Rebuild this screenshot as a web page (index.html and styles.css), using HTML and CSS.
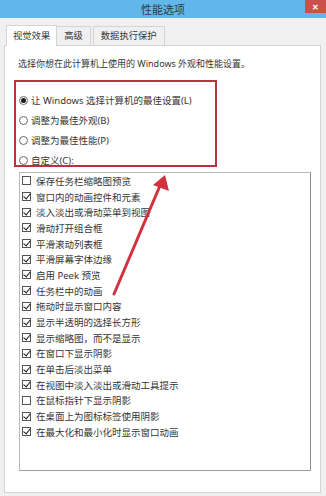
FILE: index.html
```html
<!DOCTYPE html>
<html lang="zh-CN">

<head>
    <meta charset="UTF-8">
    <meta name="viewport" content="width=device-width, initial-scale=1.0">
    <title>性能选项</title>
    <link rel="stylesheet" href="styles.css">
</head>

<body>

    <div class="titlebar">
        <div></div>
        <div class="title">性能选项</div>
        <div class="close-btn">✕</div>
    </div>

    <div class="tabs">
        <div class="tab active">视觉效果</div>
        <div class="tab">高级</div>
        <div class="tab">数据执行保护</div>
    </div>

    <div class="panel">
        <p class="desc">选择你想在此计算机上使用的 Windows 外观和性能设置。</p>

        <div class="choices">
            <div class="row"><span class="radio on"></span>让 Windows 选择计算机的最佳设置(L)</div>
            <div class="row"><span class="radio"></span>调整为最佳外观(B)</div>
            <div class="row"><span class="radio"></span>调整为最佳性能(P)</div>
            <div class="row"><span class="radio"></span>自定义(C):</div>
        </div>

        <div class="list">
            <div class="item"><span class="cb"></span>保存任务栏缩略图预览</div>
            <div class="item"><span class="cb on"></span>窗口内的动画控件和元素</div>
            <div class="item"><span class="cb on"></span>淡入淡出或滑动菜单到视图</div>
            <div class="item"><span class="cb on"></span>滑动打开组合框</div>
            <div class="item"><span class="cb on"></span>平滑滚动列表框</div>
            <div class="item"><span class="cb on"></span>平滑屏幕字体边缘</div>
            <div class="item"><span class="cb on"></span>启用 Peek 预览</div>
            <div class="item"><span class="cb on"></span>任务栏中的动画</div>
            <div class="item"><span class="cb on"></span>拖动时显示窗口内容</div>
            <div class="item"><span class="cb on"></span>显示半透明的选择长方形</div>
            <div class="item"><span class="cb on"></span>显示缩略图，而不是显示</div>
            <div class="item"><span class="cb on"></span>在窗口下显示阴影</div>
            <div class="item"><span class="cb on"></span>在单击后淡出菜单</div>
            <div class="item"><span class="cb on"></span>在视图中淡入淡出或滑动工具提示</div>
            <div class="item"><span class="cb"></span>在鼠标指针下显示阴影</div>
            <div class="item"><span class="cb on"></span>在桌面上为图标标签使用阴影</div>
            <div class="item"><span class="cb on"></span>在最大化和最小化时显示窗口动画</div>
        </div>
    </div>

    <!-- 红色箭头, 压在列表上面 -->
    <svg class="arrow" width="326" height="496" viewBox="0 0 326 496">
        <line x1="114" y1="294" x2="159" y2="188" stroke="#d2323f" stroke-width="3" stroke-linecap="round" />
        <polygon points="165,175 169,191 153,185" fill="#d2323f" />
    </svg>

</body>

</html>
```

FILE: styles.css
```css
* {
    margin: 0px;
    box-sizing: border-box;
}

body {
    width: 326px;
    height: 496px;
    overflow: hidden;
    position: relative;
    background-color: #f0f0f0;
    font-family: "Noto Sans", "Noto Sans CJK SC", sans-serif;
    color: #353535;
}

.titlebar {
    height: 18px;
    background-color: #62b7ea;
    display: grid;
    grid-template-columns: 1fr auto 1fr;
}

.title {
    font-size: 11px;
    line-height: 19px;
    color: #2b3a48;
}

.close-btn {
    justify-self: end;
    width: 21px;
    height: 13px;
    background-color: #c9504b;
    color: #fff;
    font-size: 8px;
    line-height: 13px;
    text-align: center;
    font-weight: bold;
}

.tabs {
    display: flex;
    align-items: flex-end;
    margin-top: 6px;
    padding-left: 6px;
    height: 21px;
}

.tab {
    height: 19px;
    padding: 0 7px;
    font-size: 9.3px;
    line-height: 18px;
    border: 1px solid #d4d4d4;
    border-bottom: none;
    background-color: #f0f0f0;
    margin-left: -1px;
}

.tab.active {
    height: 21px;
    padding: 0 6px;
    background-color: #fff;
    line-height: 20px;
    margin-left: 0;
    position: relative;
    z-index: 1;
    margin-bottom: -1px;
}

.tab:nth-child(3) {
    margin-left: 2px;
}

.panel {
    margin: 0 5px 0 4px;
    height: 448px;
    background-color: #fff;
    border: 1px solid #d4d4d4;
}

.desc {
    font-size: 9px;
    line-height: 14px;
    padding: 11px 0 0 13px;
}

.choices {
    margin: 9px 0 0 9px;
    width: 203px;
    height: 87px;
    border: 2px solid #b7343f;
    padding: 8px 0 0 3px;
}

.row {
    height: 20px;
    display: flex;
    align-items: center;
    font-size: 9.5px;
}

.radio {
    width: 9px;
    height: 9px;
    border: 1px solid #6a6a6a;
    border-radius: 50%;
    margin-right: 3px;
    display: flex;
    align-items: center;
    justify-content: center;
}

.radio.on::after {
    content: "";
    width: 5px;
    height: 5px;
    border-radius: 50%;
    background-color: #1a1a1a;
}

.list {
    margin: 5px 0 0 14px;
    width: 292px;
    height: 299px;
    border: 1px solid #b9b9b9;
    border-right-color: #8d8d8d;
    border-bottom-color: #9d9d9d;
    padding: 0 0 0 2px;
}

.item {
    height: 15.7px;
    display: flex;
    align-items: center;
    font-size: 9.5px;
}

.cb {
    width: 9px;
    height: 9px;
    border: 1px solid #555;
    margin-right: 5px;
    position: relative;
    flex-shrink: 0;
}

.cb.on::after {
    content: "";
    position: absolute;
    left: 2px;
    top: -1px;
    width: 3px;
    height: 6px;
    border-right: 1.6px solid #1a1a1a;
    border-bottom: 1.6px solid #1a1a1a;
    transform: rotate(40deg);
}

.arrow {
    position: absolute;
    left: 0;
    top: 0;
    pointer-events: none;
}
```
